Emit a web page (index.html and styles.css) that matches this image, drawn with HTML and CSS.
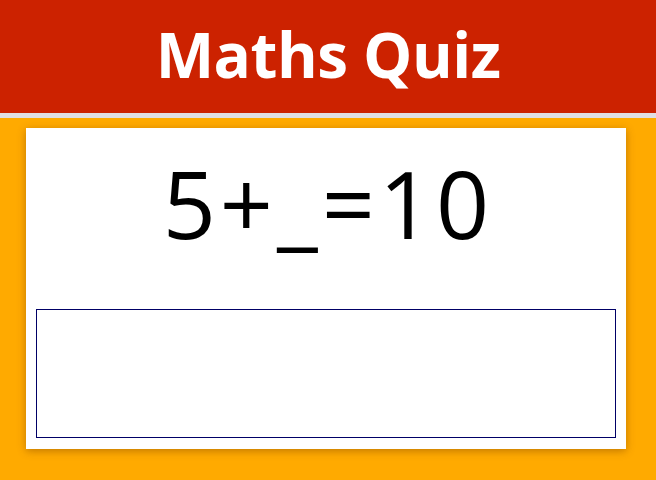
FILE: index.html
```html
<!DOCTYPE html>
<html>
<head>
<meta charset="utf-8">
<link rel="stylesheet" href="styles.css">
</head>
<body>
<header class="top">
  <h1 class="title">Maths Quiz</h1>
</header>
<main class="stage">
  <section class="card">
    <div class="question">5+_=10</div>
    <input class="answer" type="text">
  </section>
</main>
</body>
</html>
```
FILE: styles.css
```css
html, body {
  margin: 0;
  padding: 0;
}
body {
  background: #ffaa00;
  font-family: "Open Sans", "Noto Sans", "DejaVu Sans", sans-serif;
  height: 480px;
  overflow: hidden;
}
.top {
  background: #cc2200;
  height: 113px;
  border-bottom: 5px solid #e0dfe3;
  display: flex;
  align-items: center;
  justify-content: center;
  box-sizing: content-box;
}
.title {
  margin: 0 0 6px 0;
  color: #ffffff;
  font-weight: 700;
  font-size: 62px;
  line-height: 1;
  letter-spacing: -0.5px;
}
.stage {
  padding: 10px 26px 0 26px;
}
.card {
  background: #ffffff;
  width: 600px;
  box-sizing: border-box;
  padding: 0 10px 11px 10px;
  box-shadow: 0 2px 8px rgba(120, 60, 0, 0.45);
}
.question {
  height: 181px;
  display: flex;
  align-items: center;
  justify-content: center;
  font-size: 93px;
  color: #000000;
  line-height: 1;
  padding: 0 0 30px 4px;
  letter-spacing: 4px;
  box-sizing: border-box;
}
.answer {
  display: block;
  width: 580px;
  height: 129px;
  box-sizing: border-box;
  border: 1px solid #000066;
  margin: 0;
  padding: 0;
  outline: none;
  background: #ffffff;
}
```
